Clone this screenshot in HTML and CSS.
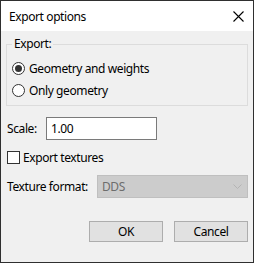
FILE: index.html
```html
<!DOCTYPE html>
<html lang="en">
<head>
    <meta charset="UTF-8">
    <title>Export options</title>
    <link rel="stylesheet" href="styles.css">
</head>
<body>
    <div class="window">
        <div class="titlebar">
            <span class="title">Export options</span>
            <svg class="close" width="11" height="11" viewBox="0 0 11 11">
                <path d="M0.5 0.5 L10.5 10.5 M10.5 0.5 L0.5 10.5" stroke="#000" stroke-width="1.1" fill="none"/>
            </svg>
        </div>

        <div class="content">
            <fieldset class="group">
                <legend>Export:</legend>
                <label class="option">
                    <input type="radio" name="mode" checked>
                    <span>Geometry and weights</span>
                </label>
                <label class="option">
                    <input type="radio" name="mode">
                    <span>Only geometry</span>
                </label>
            </fieldset>

            <div class="field-row scale-row">
                <label class="field-label scale-label" for="scale">Scale:</label>
                <input type="text" id="scale" class="text-input" value="1.00">
            </div>

            <label class="check-row">
                <input type="checkbox">
                <span>Export textures</span>
            </label>

            <div class="field-row format-row">
                <span class="field-label format-label">Texture format:</span>
                <div class="combo">
                    <span>DDS</span>
                    <svg width="9" height="5" viewBox="0 0 9 5">
                        <path d="M0.5 0.5 L4.5 4.5 L8.5 0.5" stroke="#b4b4b4" fill="none"/>
                    </svg>
                </div>
            </div>

            <div class="button-row">
                <button>OK</button>
                <button>Cancel</button>
            </div>
        </div>
    </div>
</body>
</html>
```

FILE: styles.css
```css
body {
    margin: 0;
    font-family: "Noto Sans", "Open Sans", sans-serif;
    font-size: 12px;
    letter-spacing: -0.4px;
    color: #000;
}
.window {
    width: 254px;
    height: 263px;
    box-sizing: border-box;
    border: 1px solid #2f2f2f;
    display: flex;
    flex-direction: column;
    background-color: #f0f0f0;
}
.titlebar {
    height: 30px;
    flex-shrink: 0;
    background-color: #fff;
    display: flex;
    align-items: center;
    justify-content: space-between;
    padding-left: 8px;
    padding-right: 9px;
}
.title {
    font-size: 12px;
}
.close {
    display: block;
}
.content {
    flex: 1;
    padding: 5px 5px 0 5px;
}
.group {
    margin: 0;
    border: 1px solid #dcdcdc;
    padding: 5px 6px 4px 5px;
}
.group legend {
    padding: 0 2px;
    height: 16px;
    line-height: 16px;
}
.option {
    display: flex;
    align-items: center;
    height: 22px;
}
.option input {
    appearance: none;
    margin: 0 4px 0 0;
    width: 13px;
    height: 13px;
    border: 1px solid #333;
    border-radius: 50%;
    background-color: #fff;
    box-sizing: border-box;
    display: grid;
    place-items: center;
}
.option input:checked::after {
    content: "";
    width: 7px;
    height: 7px;
    border-radius: 50%;
    background-color: #333;
}
.field-row {
    display: flex;
    align-items: center;
}
.field-label {
    padding-left: 1px;
}
.scale-row {
    margin-top: 11px;
}
.scale-label {
    width: 39px;
}
.text-input {
    width: 111px;
    height: 23px;
    box-sizing: border-box;
    border: 1px solid #7a7a7a;
    background-color: #fff;
    padding: 0 4px;
    font-family: inherit;
    font-size: 12px;
    letter-spacing: inherit;
    margin: 0;
    outline: none;
}
.check-row {
    display: flex;
    align-items: center;
    height: 13px;
    margin-top: 11px;
    padding-left: 1px;
}
.check-row input {
    appearance: none;
    margin: 0 3px 0 0;
    width: 13px;
    height: 13px;
    box-sizing: border-box;
    border: 1px solid #333;
    background-color: #fff;
}
.format-row {
    margin-top: 11px;
}
.format-label {
    width: 90px;
}
.combo {
    flex: 1;
    height: 23px;
    box-sizing: border-box;
    border: 1px solid #bfbfbf;
    background-color: #cccccc;
    color: #6d6d6d;
    display: flex;
    align-items: center;
    justify-content: space-between;
    padding: 0 5px 0 4px;
}
.button-row {
    display: flex;
    justify-content: flex-end;
    gap: 11px;
    margin-top: 23px;
}
.button-row button {
    width: 74px;
    height: 21px;
    box-sizing: border-box;
    border: 1px solid #adadad;
    background-color: #e1e1e1;
    font-family: inherit;
    font-size: 12px;
    letter-spacing: inherit;
    color: #000;
    padding: 0;
    margin: 0;
}
```
